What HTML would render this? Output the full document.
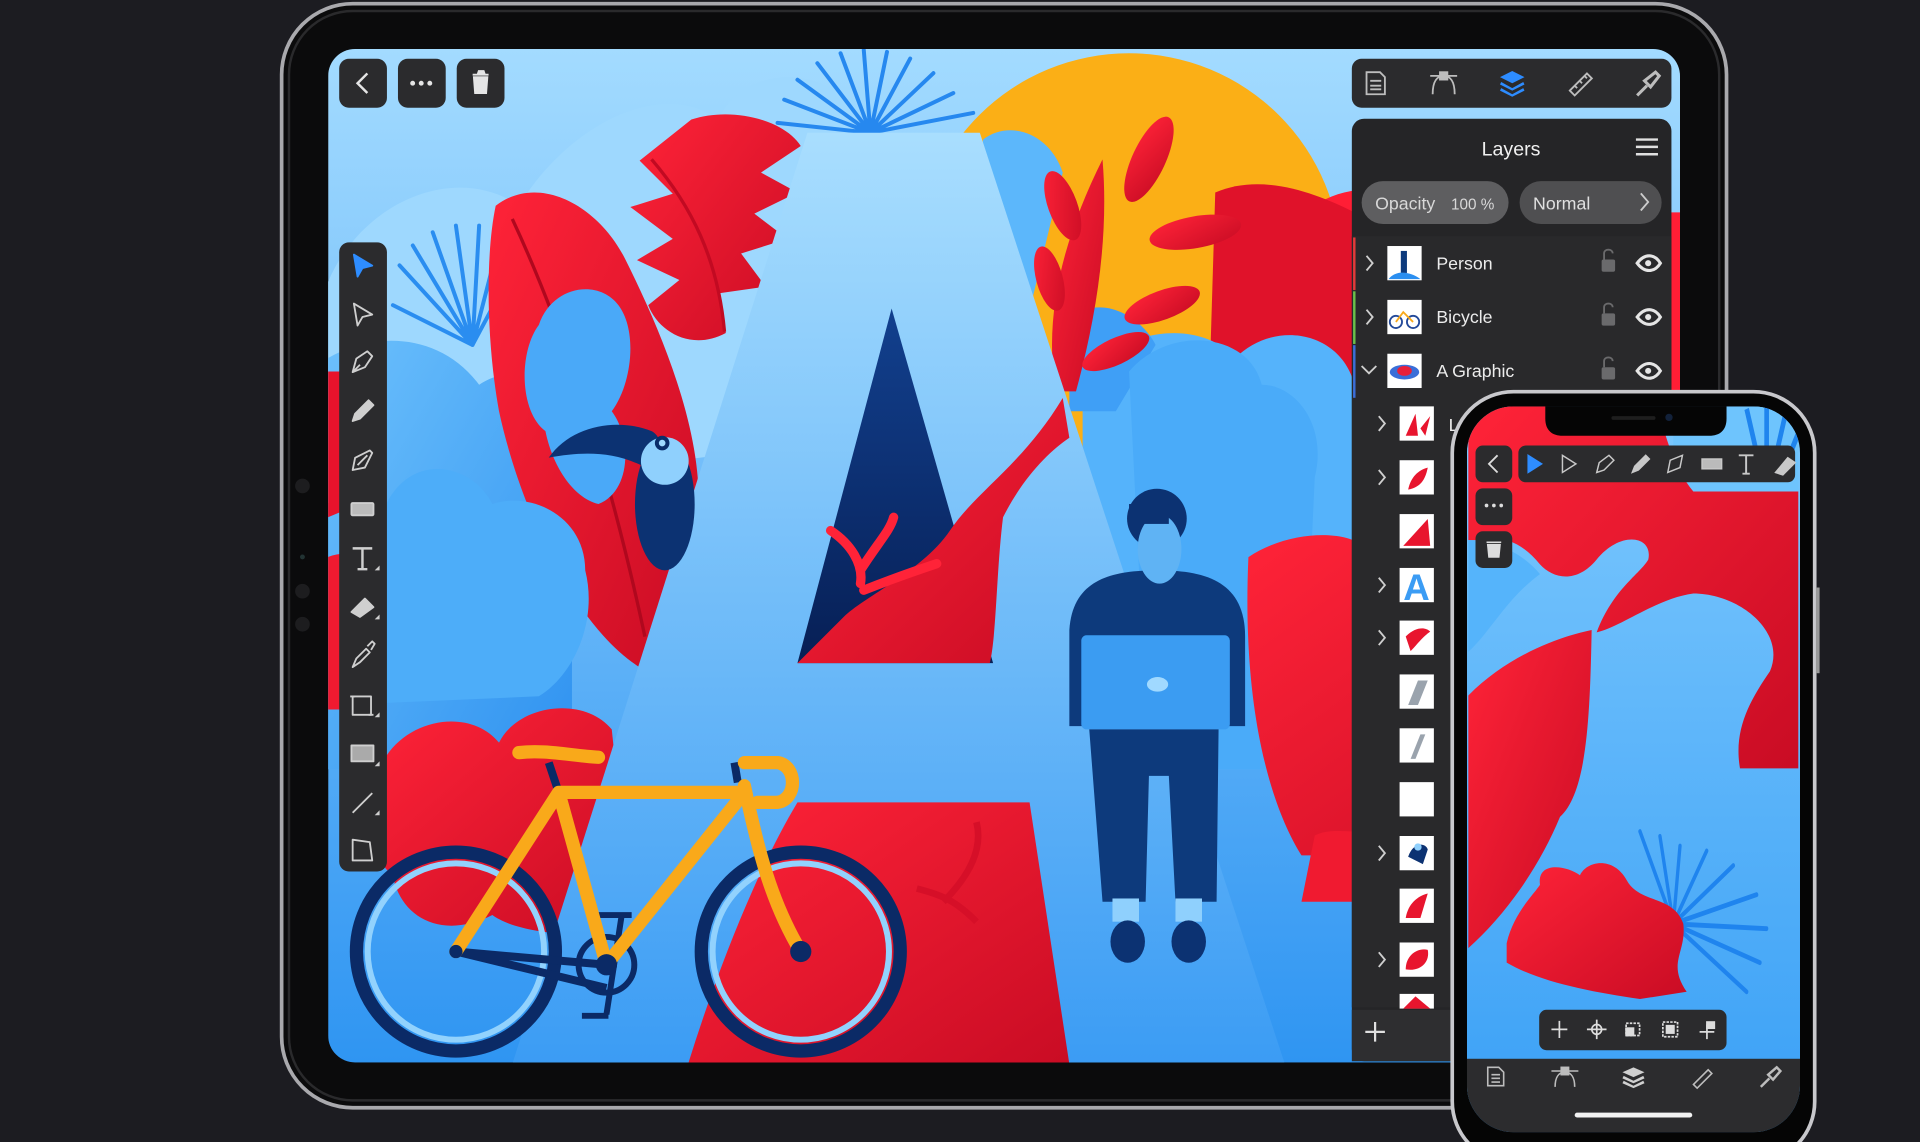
<!DOCTYPE html>
<html><head><meta charset="utf-8"><style>
html,body{margin:0;padding:0;background:#1c1c21;overflow:hidden}
svg{display:block}
text{font-family:"Liberation Sans",sans-serif}
</style></head><body>
<svg width="1920" height="1142" viewBox="0 0 1568 933" preserveAspectRatio="none" xmlns="http://www.w3.org/2000/svg">
<defs>
<clipPath id="scr"><rect x="268" y="40" width="1104" height="828" rx="22"/></clipPath>
<clipPath id="pscr"><rect x="1198" y="332" width="272" height="593" rx="38"/></clipPath>
<linearGradient id="bg" x1="0" y1="0" x2="0" y2="1"><stop offset="0" stop-color="#a3dbff"/><stop offset="1" stop-color="#2f95f2"/></linearGradient>
<linearGradient id="ag" x1="0" y1="0" x2="0" y2="1"><stop offset="0" stop-color="#a9defe"/><stop offset="1" stop-color="#3b9cf4"/></linearGradient>
<linearGradient id="rg" x1="0" y1="0" x2="1" y2="1"><stop offset="0" stop-color="#ff2338"/><stop offset="1" stop-color="#c90c24"/></linearGradient>
<linearGradient id="ng" x1="0" y1="0" x2="0" y2="1"><stop offset="0" stop-color="#12408e"/><stop offset="1" stop-color="#071f55"/></linearGradient>
<linearGradient id="pg" x1="0" y1="0" x2="0" y2="1"><stop offset="0" stop-color="#7cc8fd"/><stop offset="1" stop-color="#3aa0f6"/></linearGradient>
<linearGradient id="bb" x1="0" y1="0" x2="1" y2="1"><stop offset="0" stop-color="#6cc0fc"/><stop offset="1" stop-color="#2f92f0"/></linearGradient>
</defs>

<!-- iPad -->
<rect x="230" y="3" width="1180" height="902" rx="58" fill="#0b0b0c" stroke="#a9a9ad" stroke-width="3"/>
<rect x="236" y="9" width="1168" height="890" rx="52" fill="none" stroke="#2a2a2c" stroke-width="2"/>
<circle cx="247" cy="397" r="6" fill="#1d1d1f"/><circle cx="247" cy="455" r="2" fill="#233"/><circle cx="247" cy="483" r="6" fill="#1d1d1f"/><circle cx="247" cy="510" r="6" fill="#1d1d1f"/>

<g clip-path="url(#scr)">
<rect x="268" y="40" width="1104" height="828" fill="url(#bg)"/>
<g transform="matrix(0.5416,0,0,0.5416,261.3,32.67)">
 <!-- sun -->
 <circle cx="1220" cy="340" r="320" fill="#fbaf16"/>
 <!-- light back clouds -->
 <path d="M0,400 C40,250 200,180 300,250 C380,120 520,60 600,120 C640,40 760,30 820,120 L820,600 L0,700 Z" fill="#9ed8fe"/>
 <path d="M1000,150 C1040,120 1100,140 1120,200 L1060,450 L980,300 Z" fill="#5cb7fb"/>
 <path d="M1450,300 C1500,220 1600,200 1700,260 L2060,260 L2060,900 L1450,900 Z" fill="#ff1e35"/>
 <path d="M1350,230 C1420,200 1500,230 1560,260 L1560,560 L1340,560 Z" fill="#e0122a"/>
 <!-- rays top center -->
 <g stroke="#2688ef" stroke-width="6" stroke-linecap="round">
  <path d="M830,140 L700,90 M830,140 L720,60 M830,140 L750,35 M830,140 L785,20 M830,140 L820,15 M830,140 L855,18 M830,140 L890,28 M830,140 L925,50 M830,140 L955,80 M830,140 L985,110 M830,140 L690,125"/>
 </g>
 <g stroke="#2a8df0" stroke-width="6" stroke-linecap="round">
  <path d="M230,460 L120,340 M230,460 L140,310 M230,460 L170,290 M230,460 L205,280 M230,460 L240,280 M230,460 L275,285 M230,460 L310,310 M230,460 L110,400"/>
 </g>
 <!-- mid blue blobs -->
 <path d="M12,480 C80,440 180,440 240,520 C300,480 380,520 380,600 L380,1100 L12,1100 Z" fill="url(#bb)"/>
 <path d="M1150,520 C1200,430 1330,420 1380,480 C1440,420 1540,440 1560,520 L1560,1100 L1150,1100 Z" fill="#55b3fb"/>
 <path d="M1130,420 C1180,380 1240,420 1260,460 L1200,560 L1130,560 Z" fill="#3f9ff6"/>
 <!-- red left leaf -->
 <path d="M265,250 C330,200 420,250 460,330 C520,450 580,600 570,720 C560,840 520,930 480,945 C380,880 300,700 270,560 C250,450 250,320 265,250 Z" fill="url(#rg)"/>
 <path d="M290,270 C360,420 430,620 490,900" stroke="#b0081e" stroke-width="5" fill="none"/>
 <!-- blue blob over leaf -->
 <path d="M330,430 C350,370 420,360 450,400 C480,440 470,520 440,560 C470,600 470,680 420,700 C380,690 350,640 340,590 C300,560 300,470 330,430 Z" fill="#4aa9f8"/>
 <!-- left edge red -->
 <path d="M12,500 L70,500 C100,560 90,640 60,700 L12,720 Z" fill="#e8132c"/>
 <path d="M12,780 C60,760 120,800 140,860 C150,920 120,990 60,1010 L12,1010 Z" fill="#f01a30"/>
 <!-- monstera -->
 <path d="M560,120 C620,100 700,120 725,160 L665,200 L720,230 L655,262 L705,300 L635,322 L672,372 L602,382 L612,442 C560,470 510,440 495,400 L542,362 L478,332 L532,300 L468,252 L532,232 L482,182 Z" fill="url(#rg)"/>
 <path d="M500,180 C560,250 600,330 610,440" stroke="#c20a22" stroke-width="5" fill="none"/>
 <!-- right fern -->
 <g fill="url(#rg)">
  <path d="M1110,530 C1090,420 1120,300 1180,180 C1190,300 1170,420 1140,530 Z"/>
  <ellipse cx="1120" cy="250" rx="22" ry="55" transform="rotate(-20 1120 250)"/>
  <ellipse cx="1250" cy="180" rx="25" ry="70" transform="rotate(25 1250 180)"/>
  <ellipse cx="1320" cy="290" rx="70" ry="24" transform="rotate(-10 1320 290)"/>
  <ellipse cx="1270" cy="400" rx="60" ry="22" transform="rotate(-20 1270 400)"/>
  <ellipse cx="1200" cy="470" rx="55" ry="20" transform="rotate(-25 1200 470)"/>
  <ellipse cx="1100" cy="360" rx="20" ry="50" transform="rotate(-15 1100 360)"/>
 </g>
 <!-- blue front blobs -->
 <path d="M100,700 C140,620 230,640 260,700 C320,680 400,720 400,800 C420,880 380,960 330,990 L100,1000 Z" fill="#4dadf9"/>
 <path d="M1220,500 C1280,430 1400,440 1420,520 C1470,520 1520,580 1500,660 L1480,1100 L1250,1100 Z" fill="#4aabf9"/>
 <!-- far right red leaf -->
 <path d="M1400,780 C1460,740 1540,740 1568,760 L2060,760 L2060,1230 L1480,1230 C1430,1150 1390,1000 1400,780 Z" fill="url(#rg)"/>
 <path d="M1500,1200 C1540,1180 1568,1210 2060,1210 L2060,1300 L1480,1300 Z" fill="#f01a30"/>
 <!-- bottom left red blob -->
 <path d="M100,1080 C140,1020 230,1010 270,1060 C300,1000 400,990 440,1040 L470,1330 C420,1360 300,1350 260,1320 C180,1360 120,1320 110,1260 C60,1220 70,1140 100,1080 Z" fill="url(#rg)"/>
 <!-- A letter -->
 <path d="M735,140 L995,140 L1455,1545 L290,1545 Z" fill="url(#ag)"/>
 <path d="M862,405 L720,940 L1015,940 Z" fill="url(#ng)"/>
 <path d="M1120,540 C1060,640 990,680 950,740 C910,800 820,840 790,870 L720,940 L1010,940 C1020,900 1020,800 1030,720 C1060,660 1100,620 1130,600 Z" fill="url(#rg)"/>
 <path d="M770,740 C800,760 820,790 815,820 M815,800 C840,760 860,740 865,720 M820,830 C870,810 900,800 930,790" stroke="#ff2338" stroke-width="14" fill="none" stroke-linecap="round"/>
 <path d="M720,1150 L1070,1150 L1130,1545 L555,1545 C600,1400 660,1250 720,1150 Z" fill="url(#rg)"/>
 <path d="M940,1300 C980,1260 1000,1220 990,1180 M900,1280 C940,1290 960,1300 990,1330" stroke="#d60f28" stroke-width="10" fill="none"/>
 <!-- toucan -->
 <path d="M345,630 C380,580 450,570 500,590 C520,600 520,640 500,650 C450,620 400,620 345,630 Z" fill="#0c3272"/>
 <ellipse cx="520" cy="700" rx="45" ry="100" fill="#0c3272"/>
 <circle cx="520" cy="635" r="36" fill="#8fd0fd"/>
 <circle cx="516" cy="608" r="11" fill="#0a2d6a"/><circle cx="516" cy="608" r="5" fill="#9fd9ff"/>
 <!-- person -->
 <path d="M1130,890 C1135,810 1200,800 1265,800 C1340,800 1395,820 1395,900 L1395,1035 L1130,1035 Z" fill="#0d3a7c"/>
 <circle cx="1262" cy="722" r="45" fill="#0c3272"/>
 <ellipse cx="1266" cy="768" rx="33" ry="52" fill="#5fb3f4"/>
 <rect x="1220" y="700" width="60" height="30" fill="#0c3272"/>
 <rect x="1148" y="898" width="224" height="142" rx="8" fill="#3b9cf2"/>
 <ellipse cx="1263" cy="972" rx="16" ry="11" fill="#a0d9ff"/>
 <path d="M1160,1040 L1355,1040 L1352,1300 L1290,1300 L1280,1110 L1250,1110 L1245,1300 L1180,1300 Z" fill="#0d3a7c"/>
 <rect x="1195" y="1295" width="40" height="35" fill="#8fd0fd"/><rect x="1290" y="1295" width="40" height="35" fill="#8fd0fd"/>
 <ellipse cx="1218" cy="1360" rx="26" ry="32" fill="#0c3272"/><ellipse cx="1310" cy="1360" rx="26" ry="32" fill="#0c3272"/>
 <!-- bicycle -->
 <circle cx="205" cy="1375" r="150" fill="none" stroke="#0b2a66" stroke-width="20"/>
 <circle cx="205" cy="1375" r="133" fill="none" stroke="#92d2fd" stroke-width="9"/>
 <circle cx="725" cy="1375" r="150" fill="none" stroke="#0b2a66" stroke-width="20"/>
 <circle cx="725" cy="1375" r="133" fill="none" stroke="#92d2fd" stroke-width="9"/>
 <path d="M205,1375 L432,1395 M205,1375 L432,1430" stroke="#0b2a66" stroke-width="12" fill="none"/>
 <circle cx="432" cy="1395" r="42" fill="none" stroke="#0b2a66" stroke-width="9"/>
 <path d="M455,1320 L432,1470 M405,1320 L470,1320 M395,1472 L435,1472" stroke="#0b2a66" stroke-width="9" fill="none"/>
 <path d="M345,1090 L360,1135 M630,1120 L625,1090" stroke="#0b2a66" stroke-width="12"/>
 <g stroke="#f9a91a" stroke-width="20" fill="none" stroke-linecap="round" stroke-linejoin="round">
  <path d="M360,1135 L640,1135 M360,1135 L432,1395 L640,1135 M360,1135 L205,1375 M640,1125 C660,1220 680,1300 725,1375"/>
  <path d="M640,1090 L690,1090 C720,1095 720,1145 690,1150 L660,1150"/>
  <path d="M300,1075 C340,1070 380,1080 420,1082"/>
 </g>
 <circle cx="432" cy="1395" r="16" fill="#0b2a66"/><circle cx="725" cy="1375" r="16" fill="#0b2a66"/><circle cx="205" cy="1375" r="10" fill="#0b2a66"/>
</g>

<!-- top-left buttons -->
<g fill="#2b2b2d">
 <rect x="277" y="48" width="39" height="40" rx="8"/><rect x="325" y="48" width="39" height="40" rx="8"/><rect x="373" y="48" width="39" height="40" rx="8"/>
</g>
<path d="M300,60 L292,68 L300,76" stroke="#e5e5e5" stroke-width="2" fill="none"/>
<g fill="#e5e5e5"><circle cx="337" cy="68" r="2"/><circle cx="344" cy="68" r="2"/><circle cx="351" cy="68" r="2"/></g>
<path d="M386,61 L399,61 M390,61 L391,58 L395,58 L396,61 M387,63 L398,63 L397,76 L388,76 Z" stroke="#e5e5e5" stroke-width="1.5" fill="#e5e5e5"/>

<!-- left toolbar -->
<rect x="277" y="198" width="39" height="514" rx="8" fill="#2b2b2d"/>
<g stroke="#cfcfcf" stroke-width="1.5" fill="none" stroke-linejoin="round">
 <path d="M289,208 L304,217 L296,219 L292,226 Z" fill="#2e8dff" stroke="#2e8dff"/>
 <path d="M289,248 L304,257 L296,259 L292,266 Z"/>
 <path d="M288,304 L291,293 L300,287 L304,291 L298,300 Z M288,304 L294,298"/>
 <path d="M288,344 L290,338 L301,327 L305,331 L294,342 Z" fill="#cfcfcf"/>
 <path d="M288,384 L290,374 L302,368 L304,370 L298,382 Z M292,380 L300,372"/>
 <rect x="287" y="411" width="18" height="10" rx="1" fill="#bbb"/>
 <path d="M288,448 L304,448 M296,448 L296,465 M292,465 L300,465" stroke-width="2"/>
 <path d="M287,500 L298,489 L305,496 L294,504 Z" fill="#cfcfcf"/>
 <path d="M288,545 L291,538 L299,530 L302,533 L294,541 Z M300,528 L304,524 L306,526 L303,531"/>
 <rect x="288" y="569" width="15" height="15"/><path d="M286,569 L290,569 M301,584 L305,584"/>
 <rect x="287" y="609" width="18" height="13" fill="#aaa"/>
 <path d="M288,664 L304,648"/>
 <path d="M288,703 L304,703 L302,688 L288,686 Z"/>
</g>
<g fill="#cfcfcf"><path d="M306,466 l4,0 l0,-4 Z"/><path d="M306,506 l4,0 l0,-4 Z"/><path d="M306,586 l4,0 l0,-4 Z"/><path d="M306,626 l4,0 l0,-4 Z"/><path d="M306,666 l4,0 l0,-4 Z"/></g>

<!-- right toolbar -->
<rect x="1104" y="48" width="261" height="40" rx="8" fill="#2b2b2d"/>
<g stroke="#bdbdbd" stroke-width="1.5" fill="none">
 <path d="M1116,59 L1127,59 L1131,63 L1131,77 L1116,77 Z M1119,66 L1128,66 M1119,70 L1128,70 M1119,73 L1128,73"/>
 <path d="M1170,77 C1170,66 1174,62 1179,62 C1184,62 1188,66 1188,77 M1168,62 L1190,62"/><rect x="1176" y="59" width="6" height="6" fill="#bdbdbd"/>
 <path d="M1282,74 L1296,60 L1300,64 L1286,78 Z M1286,70 l2,2 M1290,66 l2,2 M1294,62 l2,2"/>
 <path d="M1337,78 L1345,70 M1343,66 L1352,59 L1355,62 L1348,71 Z" stroke-width="2.5"/>
</g>
<g fill="#2d8cff"><path d="M1235,58 L1245,63 L1235,68 L1225,63 Z"/><path d="M1226,67 L1235,72 L1244,67 L1245,69 L1235,74 L1225,69 Z"/><path d="M1226,72 L1235,77 L1244,72 L1245,74 L1235,79 L1225,74 Z"/></g>

<!-- layers panel -->
<rect x="1104" y="97" width="261" height="770" rx="10" fill="#252527"/>
<text x="1234" y="127" font-size="16" fill="#f0f0f0" text-anchor="middle">Layers</text>
<g stroke="#e0e0e0" stroke-width="2"><path d="M1336,114 L1354,114 M1336,120 L1354,120 M1336,126 L1354,126"/></g>
<rect x="1112" y="148" width="120" height="35" rx="17.5" fill="#5e5e60"/>
<text x="1123" y="171" font-size="14.5" fill="#d8d8d8">Opacity</text><text x="1185" y="171" font-size="12.5" fill="#d8d8d8">100 %</text>
<rect x="1241" y="148" width="116" height="35" rx="17.5" fill="#4f4f51"/>
<text x="1252" y="171" font-size="14.5" fill="#e0e0e0">Normal</text>
<path d="M1340,158 L1346,165 L1340,172" stroke="#ccc" stroke-width="1.5" fill="none"/>
<rect x="1104" y="193" width="261" height="630" fill="#29292b"/>
<rect x="1105" y="194" width="2" height="43" fill="#e23a3a"/><rect x="1105" y="238" width="2" height="43" fill="#6bc04a"/><rect x="1105" y="282" width="2" height="43" fill="#3b6fd8"/>
<g stroke="#cfcfcf" stroke-width="1.5" fill="none">
 <path d="M1116,209 L1121,215 L1116,221"/><path d="M1116,253 L1121,259 L1116,265"/><path d="M1112,299 L1118,305 L1124,299"/>
</g>
<g fill="#fff"><rect x="1133" y="201" width="28" height="28"/><rect x="1133" y="245" width="28" height="28"/><rect x="1133" y="289" width="28" height="28"/></g>
<rect x="1144" y="205" width="5" height="18" fill="#0d3a7c"/><path d="M1134,228 C1140,220 1152,222 1160,228 Z" fill="#2a8ef0"/>
<circle cx="1140" cy="263" r="5" fill="none" stroke="#244a9a" stroke-width="1.5"/><circle cx="1154" cy="263" r="5" fill="none" stroke="#244a9a" stroke-width="1.5"/><path d="M1140,263 L1146,255 L1154,263" stroke="#f9a91a" stroke-width="1.5" fill="none"/>
<ellipse cx="1147" cy="304" rx="12" ry="6" fill="#3a6ed8"/><ellipse cx="1147" cy="303" rx="6" ry="4" fill="#e8203a"/>
<g font-size="14.5" fill="#ececec"><text x="1173" y="220">Person</text><text x="1173" y="264">Bicycle</text><text x="1173" y="308">A Graphic</text></g>
<g fill="#6a6a6c"><rect x="1308" y="212" width="11" height="10" rx="1.5"/><rect x="1308" y="256" width="11" height="10" rx="1.5"/><rect x="1308" y="300" width="11" height="10" rx="1.5"/></g>
<g stroke="#6a6a6c" stroke-width="1.5" fill="none"><path d="M1310,212 L1310,207 C1310,203 1317,203 1317,207"/><path d="M1310,256 L1310,251 C1310,247 1317,247 1317,251"/><path d="M1310,300 L1310,295 C1310,291 1317,291 1317,295"/></g>
<g fill="none" stroke="#e5e5e5" stroke-width="2.5"><path d="M1337,215 C1343,207 1351,207 1356,215 C1351,223 1343,223 1337,215 Z"/><path d="M1337,259 C1343,251 1351,251 1356,259 C1351,267 1343,267 1337,259 Z"/><path d="M1337,303 C1343,295 1351,295 1356,303 C1351,311 1343,311 1337,303 Z"/></g>
<g fill="#e5e5e5"><circle cx="1346" cy="215" r="2.5"/><circle cx="1346" cy="259" r="2.5"/><circle cx="1346" cy="303" r="2.5"/></g>
<!-- sub rows -->
<g stroke="#cfcfcf" stroke-width="1.5" fill="none">
 <path d="M1126,340 L1131,346 L1126,352"/><path d="M1126,384 L1131,390 L1126,396"/><path d="M1126,472 L1131,478 L1126,484"/><path d="M1126,515 L1131,521 L1126,527"/><path d="M1126,691 L1131,697 L1126,703"/><path d="M1126,778 L1131,784 L1126,790"/>
</g>
<g fill="#fff">
 <rect x="1143" y="332" width="28" height="28"/><rect x="1143" y="376" width="28" height="28"/><rect x="1143" y="420" width="28" height="28"/><rect x="1143" y="464" width="28" height="28"/><rect x="1143" y="507" width="28" height="28"/><rect x="1143" y="551" width="28" height="28"/><rect x="1143" y="595" width="28" height="28"/><rect x="1143" y="639" width="28" height="28"/><rect x="1143" y="683" width="28" height="28"/><rect x="1143" y="726" width="28" height="28"/><rect x="1143" y="770" width="28" height="28"/><rect x="1143" y="812" width="28" height="12"/>
</g>
<g fill="#e8152e">
 <path d="M1148,356 L1156,338 L1158,356 Z M1160,350 L1168,340 L1164,356 Z"/>
 <path d="M1150,400 C1152,390 1158,384 1166,382 C1164,392 1160,398 1150,400 Z"/>
 <path d="M1146,446 L1166,424 L1168,446 Z"/>
 <path d="M1148,520 C1156,512 1164,512 1168,516 C1162,520 1156,528 1152,532 Z"/>
 <path d="M1148,750 C1150,738 1158,732 1166,730 L1160,750 Z"/>
 <path d="M1148,792 C1148,780 1158,774 1166,776 C1168,786 1160,794 1148,792 Z"/>
 <path d="M1146,824 L1156,814 L1168,824 Z"/>
</g>
<text x="1146" y="490" font-size="30" font-weight="bold" fill="#3b9cf4">A</text>
<g fill="#9aa3ad"><path d="M1150,576 L1158,556 L1166,556 L1158,576 Z"/><path d="M1152,620 L1160,600 L1164,600 L1156,620 Z"/></g>
<path d="M1150,700 C1154,688 1164,688 1166,694 L1162,706 Z" fill="#0c3272"/><circle cx="1158" cy="692" r="3" fill="#8fd0fd"/>
<text x="1183" y="352" font-size="14.5" fill="#ececec">L</text>
<rect x="1104" y="825" width="261" height="42" fill="#2e2e30"/>
<path d="M1115,843 L1131,843 M1123,835 L1123,851" stroke="#e0e0e0" stroke-width="1.8"/>
</g>

<!-- iPhone -->
<rect x="1186" y="320" width="296" height="630" rx="50" fill="#050505" stroke="#c8c8cc" stroke-width="3"/>
<rect x="1483" y="480" width="3" height="70" fill="#999"/>
<g clip-path="url(#pscr)">
 <rect x="1198" y="332" width="272" height="593" fill="url(#pg)"/>
 <g transform="matrix(0.2722,0,0,0.3968,1176,310.3)">
  <path d="M700,55 L1075,55 L1075,240 C980,250 800,240 700,220 Z" fill="#6ec4fd"/>
  <g stroke="#1f84ee" stroke-width="14"><path d="M950,150 L920,60 M980,140 L980,55 M1010,150 L1040,60 M1040,170 L1075,110"/></g>
  <path d="M85,55 L650,55 C680,120 700,180 760,230 L1075,230 L1075,800 L900,800 C880,720 930,660 990,600 C1040,520 900,440 760,440 C650,450 540,510 470,520 C520,430 600,400 625,370 C640,320 540,310 470,370 C410,420 340,410 300,380 C240,330 180,320 120,330 L85,330 Z" fill="url(#rg)"/>
  <path d="M85,650 C200,570 350,530 455,515 C450,700 440,850 360,900 C300,1000 200,1100 85,1170 Z" fill="url(#rg)"/>
  <path d="M85,330 C150,330 240,350 300,400 C200,450 150,520 85,560 Z" fill="#55b4fb"/>
  <g stroke="#1f84ee" stroke-width="10" stroke-linecap="round"><path d="M700,1120 L600,930 M700,1120 L660,940 M700,1120 L720,960 M700,1120 L800,970 M700,1120 L880,1000 M700,1120 L950,1060 M700,1120 L980,1130 M700,1120 L960,1200 M700,1120 L920,1260"/></g>
  <path d="M200,1160 C220,1100 280,1060 300,1040 C290,990 380,1000 420,1020 C440,990 520,980 560,1030 C600,1080 700,1060 730,1120 C740,1180 680,1200 740,1260 L600,1275 C450,1260 300,1240 200,1200 Z" fill="url(#rg)"/>
 </g>
 <!-- notch -->
 <path d="M1262,332 L1410,332 L1410,342 C1410,352 1404,356 1396,356 L1276,356 C1268,356 1262,352 1262,342 Z" fill="#050505"/>
 <rect x="1316" y="340" width="36" height="3" rx="1.5" fill="#1e1e1e"/><circle cx="1363" cy="341" r="3" fill="#12213a"/>
 <!-- phone buttons -->
 <g fill="#2b2b2d"><rect x="1205" y="364" width="30" height="30" rx="6"/><rect x="1205" y="399" width="30" height="30" rx="6"/><rect x="1205" y="434" width="30" height="30" rx="6"/><rect x="1240" y="364" width="226" height="30" rx="6"/></g>
 <path d="M1223,372 L1216,379 L1223,386" stroke="#ddd" stroke-width="1.5" fill="none"/>
 <g fill="#ddd"><circle cx="1214" cy="413" r="1.5"/><circle cx="1220" cy="413" r="1.5"/><circle cx="1226" cy="413" r="1.5"/></g>
 <path d="M1214,443 L1226,443 M1215,445 L1225,445 L1224,455 L1216,455 Z" stroke="#ddd" stroke-width="1.3" fill="#ddd"/>
 <g stroke="#c8c8c8" stroke-width="1.2" fill="none">
  <path d="M1248,372 L1259,379 L1248,386 Z" fill="#2e8dff" stroke="#2e8dff"/>
  <path d="M1276,372 L1287,379 L1276,386 Z"/>
  <path d="M1304,386 L1306,378 L1314,372 L1318,376 L1310,384 Z"/>
  <path d="M1333,386 L1335,381 L1344,372 L1347,375 L1338,384 Z" fill="#c8c8c8"/>
  <path d="M1362,386 L1364,376 L1374,372 L1372,382 Z"/>
  <rect x="1390" y="375" width="16" height="8" fill="#bbb"/>
  <path d="M1420,372 L1432,372 M1426,372 L1426,387 M1423,387 L1429,387" stroke-width="1.6"/>
  <path d="M1450,386 L1460,374 L1466,378 L1456,388 Z" fill="#c8c8c8"/>
 </g>
 <!-- bottom float bar -->
 <rect x="1257" y="825" width="153" height="33" rx="6" fill="#2b2b2d"/>
 <g stroke="#ddd" stroke-width="1.4" fill="none">
  <path d="M1267,841 L1280,841 M1273.5,834 L1273.5,848"/>
  <circle cx="1304" cy="841" r="4"/><path d="M1296,841 L1312,841 M1304,833 L1304,849"/>
  <rect x="1328" y="836" width="11" height="10" stroke-dasharray="2 1"/><rect x="1328" y="840" width="6" height="6" fill="#ddd"/>
  <rect x="1358" y="835" width="12" height="12" stroke-dasharray="2 1"/><rect x="1361" y="838" width="6" height="6" fill="#ddd"/>
  <path d="M1388,843 L1400,843 M1394,837 L1394,849"/><rect x="1394" y="835" width="6" height="5" fill="#ddd"/>
 </g>
 <!-- bottom toolbar -->
 <rect x="1198" y="865" width="272" height="68" fill="#2c2c2e"/>
 <g stroke="#bdbdbd" stroke-width="1.3" fill="none">
  <path d="M1215,872 L1224,872 L1228,876 L1228,887 L1215,887 Z M1218,878 L1225,878 M1218,881 L1225,881 M1218,884 L1225,884"/>
  <path d="M1270,888 C1270,880 1273,876 1278,876 C1283,876 1286,880 1286,888 M1267,875 L1289,875"/><rect x="1275" y="872" width="6" height="6" fill="#bdbdbd"/>
  <path d="M1383,886 L1395,874 L1398,877 L1386,889 Z"/>
  <path d="M1438,888 L1445,881 M1444,878 L1451,872 L1454,875 L1448,882 Z" stroke-width="2"/>
 </g>
 <g fill="#d0d0d0"><path d="M1334,872 L1343,876 L1334,880 L1325,876 Z"/><path d="M1326,879 L1334,883 L1342,879 L1343,881 L1334,885 L1325,881 Z"/><path d="M1326,883 L1334,887 L1342,883 L1343,885 L1334,889 L1325,885 Z"/></g>
 <rect x="1286" y="909" width="96" height="4" rx="2" fill="#f2f2f2"/>
</g>
</svg>
</body></html>
